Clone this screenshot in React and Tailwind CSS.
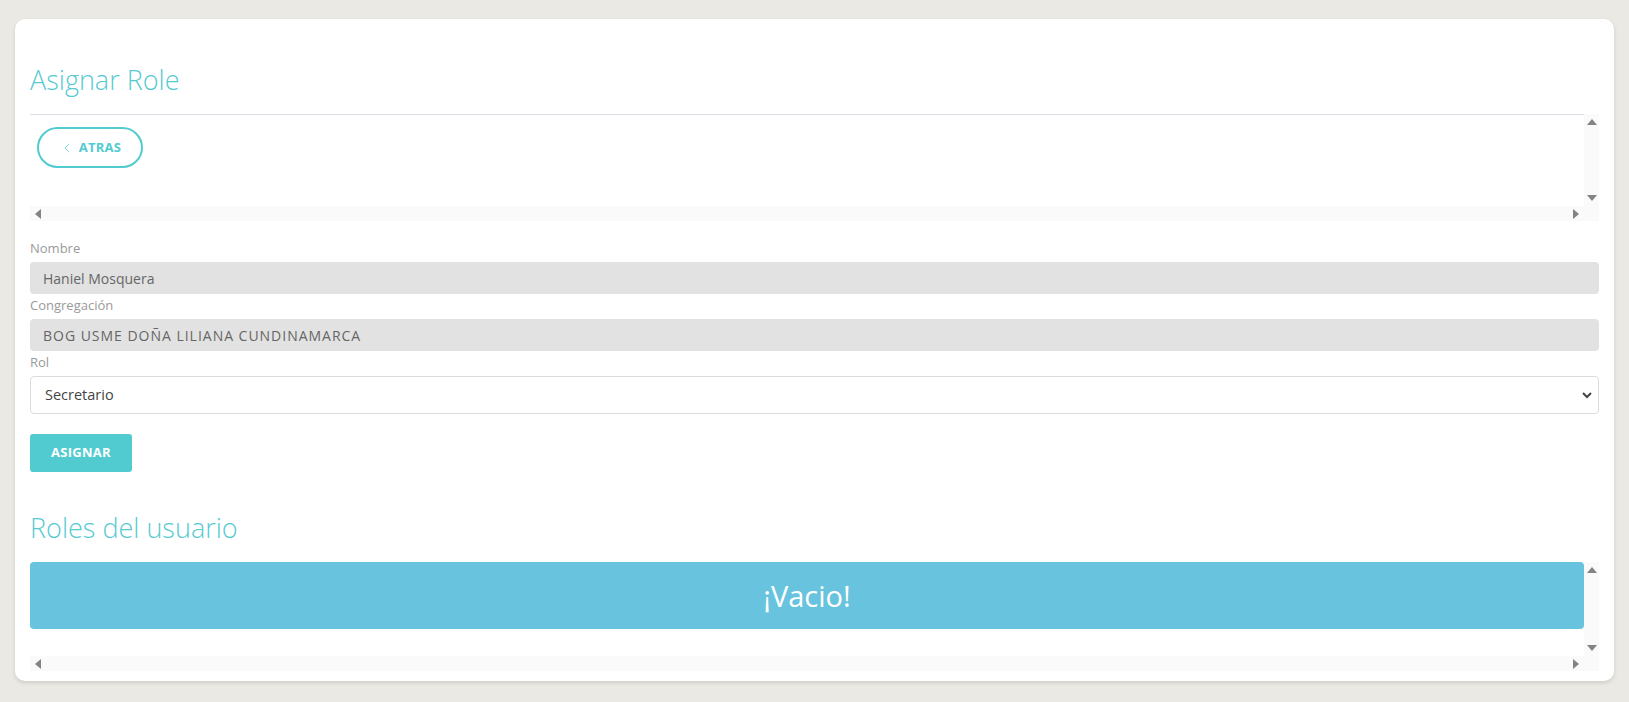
import { ChevronLeft } from 'lucide-react';

function Arrow({ dir }) {
    const pts = {
        up: '0,6 5,0 10,6',
        down: '0,0 10,0 5,6',
        left: '6,0 6,10 0,5',
        right: '0,0 0,10 6,5',
    }[dir];
    const vertical = dir === 'up' || dir === 'down';
    return (
        <svg width={vertical ? 10 : 6} height={vertical ? 6 : 10} viewBox={vertical ? '0 0 10 6' : '0 0 6 10'}>
            <polygon points={pts} fill="#838383" />
        </svg>
    );
}

// fake classic scrollbars round a block
function ScrollFrame({ height, children }) {
    return (
        <div className="grid grid-cols-[1fr_15px] grid-rows-[1fr_15px]" style={{ height }}>
            <div className="overflow-hidden">{children}</div>
            <div className="bg-[#fafafa] flex flex-col items-center justify-between py-[5px]">
                <Arrow dir="up" />
                <Arrow dir="down" />
            </div>
            <div className="bg-[#fafafa] flex items-center justify-between px-[5px]">
                <Arrow dir="left" />
                <Arrow dir="right" />
            </div>
            <div className="bg-[#fafafa]" />
        </div>
    );
}

export default function App() {
    return (
        <div className="min-h-screen w-full bg-[#ebe9e4] pt-[19px] px-[15px] pb-[21px]" style={{ fontFamily: '"Open Sans", "Noto Sans", sans-serif' }}>
            <div className="bg-white rounded-[10px] shadow-[0_2px_4px_rgba(0,0,0,0.12)] px-[15px] pt-[45px] pb-[10px]">
                {/* header */}
                <h2 className="text-[27px] leading-[32px] font-light text-[#57cad1] mb-[18px]">Asignar Role</h2>

                <ScrollFrame height={107}>
                    <div className="border-t border-[#dcdce4] pt-[12px] pl-[7px]">
                        <button className="w-[106px] h-[41px] rounded-full border-2 border-[#52cbd0] flex items-center justify-center gap-1 text-[#52cbd0] text-[13px] font-bold tracking-[0.02em]">
                            <ChevronLeft className="w-4 h-4" strokeWidth={1.1} /> ATRAS
                        </button>
                    </div>
                </ScrollFrame>

                {/* form */}
                <div className="mt-[18px]">
                    <label className="block text-[13px] leading-[18px] text-[#9a9a9a] mb-[5px]">Nombre</label>
                    <div className="h-[32px] bg-[#e2e2e2] rounded-[4px] flex items-center px-[13px] text-[14px] text-[#666]">Haniel Mosquera</div>
                    <label className="block text-[13px] leading-[18px] text-[#9a9a9a] mt-[2px] mb-[5px]">Congregación</label>
                    <div className="h-[32px] bg-[#e2e2e2] rounded-[4px] flex items-center px-[13px] text-[14px] tracking-[0.07em] text-[#666]">BOG USME DOÑA LILIANA CUNDINAMARCA</div>
                    <label className="block text-[13px] leading-[18px] text-[#9a9a9a] mt-[2px] mb-[5px]">Rol</label>
                    <div className="h-[38px] border border-[#dcdcdc] rounded-[4px] flex items-center justify-between pl-[14px] pr-[3px] text-[14.5px] text-[#444]">
                        <span>Secretario</span>
                        <svg width="14" height="14" viewBox="0 0 14 14" className="mr-[1px]">
                            <path d="M3 5 L7 9 L11 5" fill="none" stroke="#444" strokeWidth="2" />
                        </svg>
                    </div>
                    <button className="mt-[20px] w-[102px] h-[38px] bg-[#52cbd0] rounded-[3px] text-white text-[13px] font-bold tracking-[0.02em]">ASIGNAR</button>
                </div>

                {/* roles */}
                <h2 className="mt-[40px] text-[27px] leading-[32px] font-light text-[#57cad1] mb-[18px]">Roles del usuario</h2>
                <ScrollFrame height={109}>
                    <div className="h-[67px] bg-[#67c3de] rounded-[4px] flex items-center justify-center text-white text-[29px]">¡Vacio!</div>
                </ScrollFrame>
            </div>
        </div>
    );
}
